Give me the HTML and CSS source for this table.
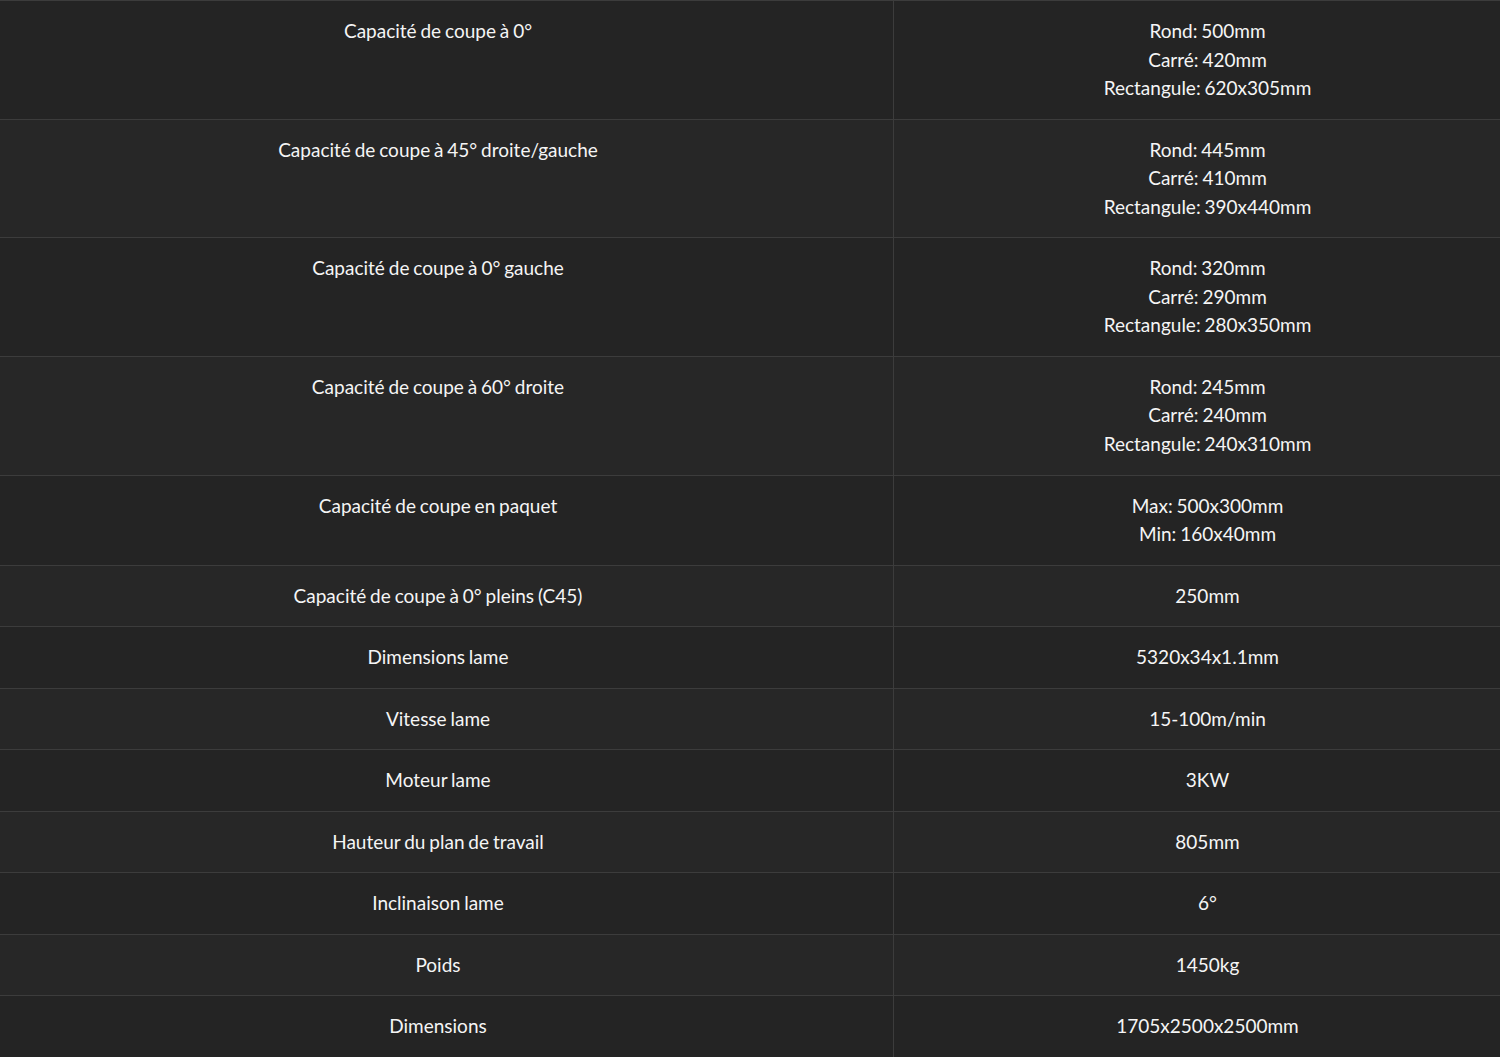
FILE: index.html
```html
<!DOCTYPE html>
<html lang="fr">
<head>
<meta charset="utf-8">
<title>Caractéristiques</title>
<link rel="stylesheet" href="styles.css">
</head>
<body>
<table class="specs">
<tbody>
<tr><td class="label">Capacité de coupe à 0°</td><td class="value">Rond: 500mm<br>Carré: 420mm<br>Rectangule: 620x305mm</td></tr>
<tr><td class="label">Capacité de coupe à 45° droite/gauche</td><td class="value">Rond: 445mm<br>Carré: 410mm<br>Rectangule: 390x440mm</td></tr>
<tr><td class="label">Capacité de coupe à 0° gauche</td><td class="value">Rond: 320mm<br>Carré: 290mm<br>Rectangule: 280x350mm</td></tr>
<tr><td class="label">Capacité de coupe à 60° droite</td><td class="value">Rond: 245mm<br>Carré: 240mm<br>Rectangule: 240x310mm</td></tr>
<tr><td class="label">Capacité de coupe en paquet</td><td class="value">Max: 500x300mm<br>Min: 160x40mm</td></tr>
<tr><td class="label">Capacité de coupe à 0° pleins (C45)</td><td class="value">250mm</td></tr>
<tr><td class="label">Dimensions lame</td><td class="value">5320x34x1.1mm</td></tr>
<tr><td class="label">Vitesse lame</td><td class="value">15-100m/min</td></tr>
<tr><td class="label">Moteur lame</td><td class="value">3KW</td></tr>
<tr><td class="label">Hauteur du plan de travail</td><td class="value">805mm</td></tr>
<tr><td class="label">Inclinaison lame</td><td class="value">6°</td></tr>
<tr><td class="label">Poids</td><td class="value">1450kg</td></tr>
<tr><td class="label">Dimensions</td><td class="value">1705x2500x2500mm</td></tr>
</tbody>
</table>
</body>
</html>
```
FILE: styles.css
```css
html, body {
  margin: 0;
  padding: 0;
  background: #242424;
}
body {
  font-family: Lato, "Open Sans", sans-serif;
  color: #f5f5f5;
}
.specs {
  width: 1500px;
  border-collapse: collapse;
  table-layout: fixed;
  font-size: 19px;
  line-height: 28.55px;
  word-spacing: -1px;
}
.specs tr {
  border-top: 1px solid #3c3c3c;
}
.specs tr:nth-child(odd) {
  background: #242424;
}
.specs tr:nth-child(even) {
  background: #272727;
}
.specs td {
  text-align: center;
  vertical-align: top;
  padding: 16px 0 16px 0;
}
.specs td.label {
  width: 876px;
  padding-right: 17px;
  border-right: 1px solid #3c3c3c;
}
.specs td.value {
  padding-left: 21px;
}
```
